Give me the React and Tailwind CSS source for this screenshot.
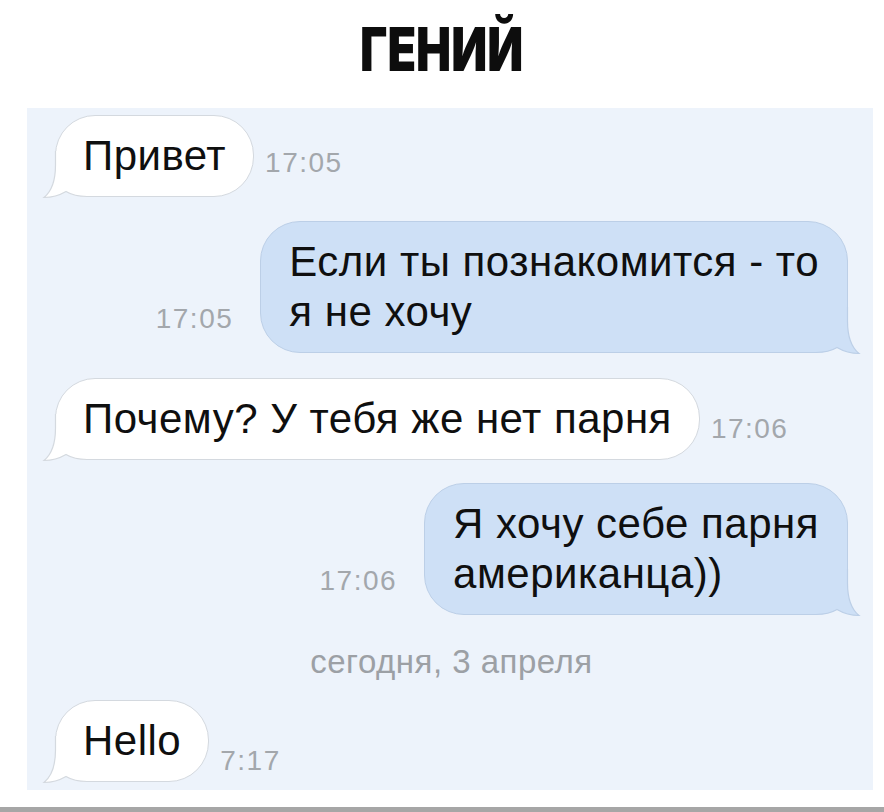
const FONT = { fontFamily: '"Liberation Sans", Arial, sans-serif' };

function Tail({ side, fill, stroke }) {
  // bubble tail drawn over the bottom corner of the bubble
  const outline =
    'M12.5 0 V14 C12.5 30 9 40 1 46.5 C9 46.5 17 44 23 40.5 C28 43.5 34 45.5 44 45.5 H60';
  return (
    <svg
      width="60"
      height="47"
      viewBox="0 0 60 47"
      className={
        side === 'left'
          ? 'absolute left-[-13px] bottom-[-2px] overflow-visible'
          : 'absolute right-[-13px] bottom-[-2px] overflow-visible -scale-x-100'
      }
    >
      <path d={outline + ' V0 Z'} fill={fill} />
      <path d={outline} fill="none" stroke={stroke} strokeWidth="1.2" />
    </svg>
  );
}

function Incoming({ text, time, timeMb }) {
  return (
    <div className="flex items-end">
      <div className="relative rounded-[40px] border border-[#d4d9df] bg-white px-[27px] py-[15px]">
        <Tail side="left" fill="#ffffff" stroke="#d4d9df" />
        <span className="relative z-10 block whitespace-nowrap text-[42px] leading-[50px] tracking-[0.5px] text-[#0f0f0f]">
          {text}
        </span>
      </div>
      <span className={'ml-[11px] text-[28px] leading-[28px] tracking-[1.5px] text-[#a3a7ac] ' + timeMb}>
        {time}
      </span>
    </div>
  );
}

function Outgoing({ lines, time }) {
  return (
    <div className="flex items-end justify-end">
      <span className="mr-[27px] mb-[20px] text-[28px] leading-[28px] tracking-[1.5px] text-[#a3a7ac]">{time}</span>
      <div className="relative rounded-[40px] border border-[#bccfe7] bg-[#cee0f6] px-[28px] py-[15px]">
        <Tail side="right" fill="#cee0f6" stroke="#bccfe7" />
        <span className="relative z-10 block whitespace-nowrap text-[42px] leading-[50px] tracking-[0.5px] text-[#0f0f0f]">
          {lines[0]}
          <br />
          {lines[1]}
        </span>
      </div>
    </div>
  );
}

export default function App() {
  return (
    <div className="flex h-[812px] w-[884px] flex-col bg-white" style={FONT}>
      <div className="flex h-[79px] items-end justify-center">
        <span
          className="inline-block origin-center scale-x-[0.78] text-[60px] font-black leading-[60px] text-[#0d0d0d]"
          style={{ fontFamily: 'Inter, "Liberation Sans", sans-serif' }}
        >
          ГЕНИЙ
        </span>
      </div>

      <div className="ml-[27px] mt-[29px] flex h-[682px] w-[846px] flex-col bg-[#edf3fb] pl-[28px] pr-[25px] pt-[7px]">
        <Incoming text="Привет" time="17:05" timeMb="mb-[20px]" />
        <div className="mt-[24px]">
          <Outgoing lines={['Если ты познакомится - то', 'я не хочу']} time="17:05" />
        </div>
        <div className="mt-[25px]">
          <Incoming text="Почему? У тебя же нет парня" time="17:06" timeMb="mb-[17px]" />
        </div>
        <div className="mt-[23px]">
          <Outgoing lines={['Я хочу себе парня', 'американца))']} time="17:06" />
        </div>
        <div className="mt-[28px] text-center text-[33px] leading-[38px] tracking-[0.5px] text-[#9ca0a5]">
          сегодня, 3 апреля
        </div>
        <div className="mt-[19px]">
          <Incoming text="Hello" time="7:17" timeMb="mb-[7px]" />
        </div>
      </div>

      <div className="mt-[17px] h-[5px] bg-[#a6a6a6]" />
    </div>
  );
}
